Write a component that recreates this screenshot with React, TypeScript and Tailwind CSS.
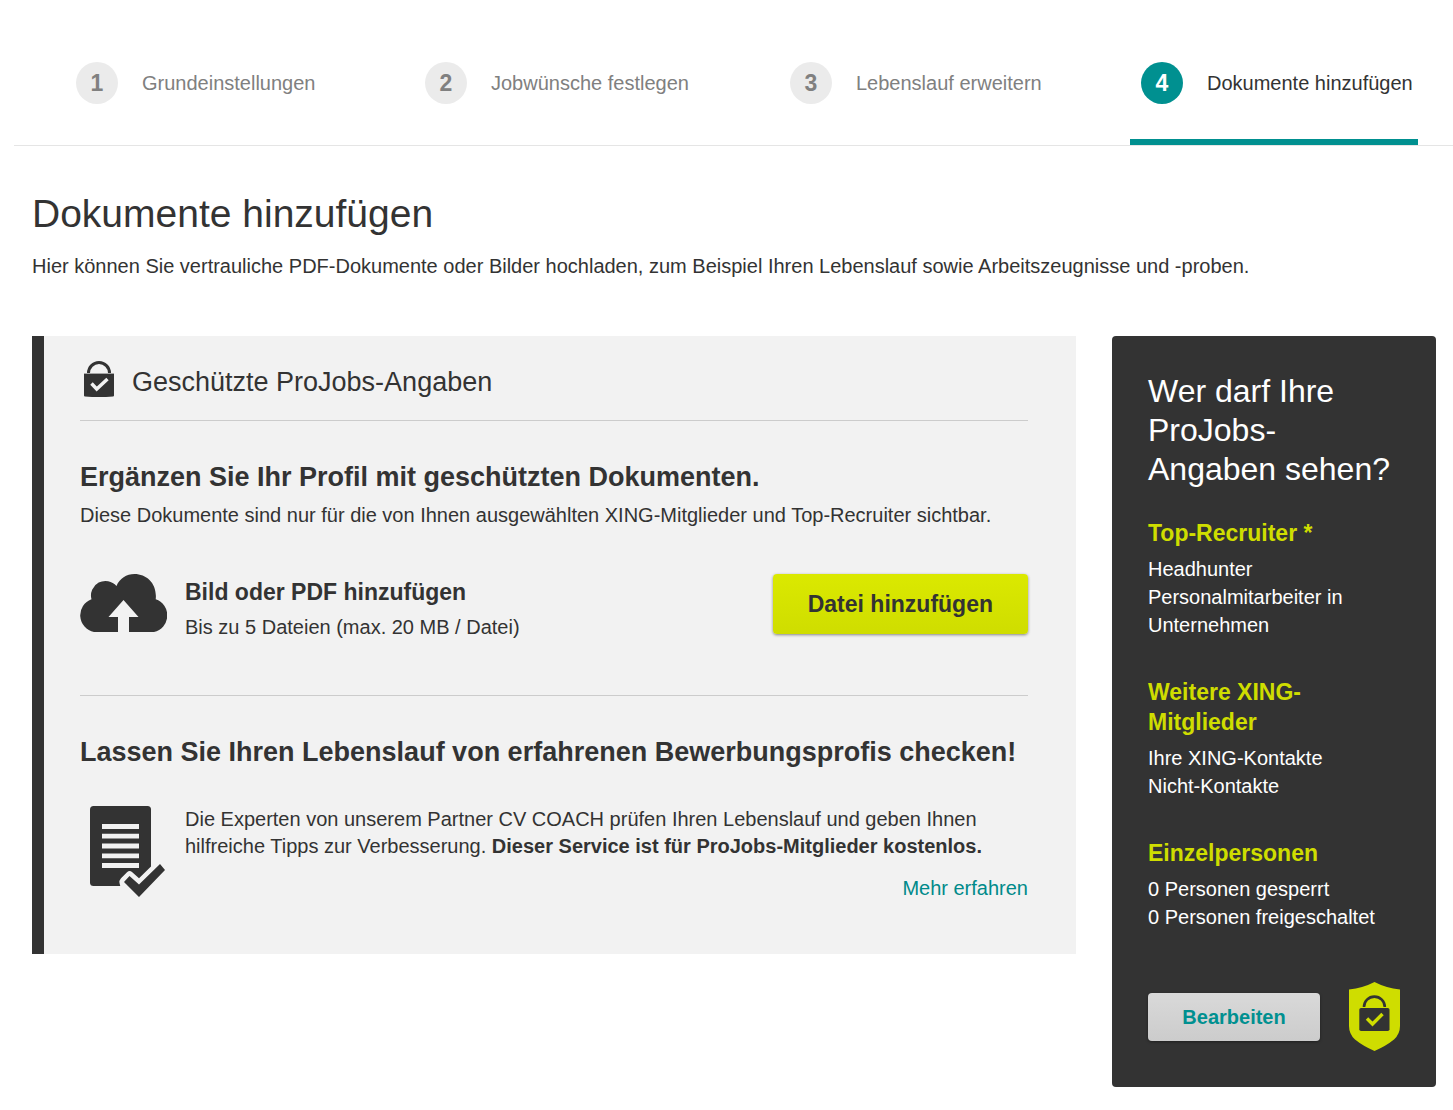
import type { ReactNode } from "react";

const steps = [
  { label: "Grundeinstellungen" },
  { label: "Jobwünsche festlegen" },
  { label: "Lebenslauf erweitern" },
  { label: "Dokumente hinzufügen", active: true },
];

function LockIcon() {
  return (
    <svg width="30" height="36" viewBox="0 0 30 36" aria-hidden="true" className="shrink-0">
      <path d="M4.500 12A10.500 10.500 0 0 1 25.500 12" fill="none" stroke="#333333" strokeWidth="3" />
      <path d="M0 12.500h30" stroke="#a6a6a6" strokeWidth="1" />
      <path d="M0 13h30V34.500q0 1-1 1Q15 36.500 1 35.500q-1 0-1-1Z" fill="#333333" />
      <path d="M7.500 22.500l5.200 5.500L23.500 18" fill="none" stroke="#f2f2f2" strokeWidth="3.400" />
    </svg>
  );
}

function CloudUploadIcon() {
  return (
    <svg width="87" height="58" viewBox="0 0 87 58" aria-hidden="true" className="shrink-0">
      <path
        d="M14 58A17 17 0 0 1 11.500 25.300A14.500 14.500 0 0 1 36.500 12C39.500 4.500 46.500 0 54.500 0C67 0 77.500 10 75.700 25.300A17 17 0 0 1 74 58H49V43H58.500L43.500 26L28.500 43H38V58Z"
        fill="#333333"
      />
    </svg>
  );
}

function DocumentCheckIcon() {
  return (
    <svg width="75" height="91" viewBox="0 0 75 91" aria-hidden="true" className="shrink-0">
      <rect width="61" height="80" rx="3.500" fill="#333333" />
      <path d="M12 20.500h37M12 30.200h37M12 40h37M12 49.800h37M12 59.500h37" stroke="#f2f2f2" strokeWidth="4.800" />
      <path d="M30.500 81L29.500 77Q29 74.500 31 72.300L37 66.300Q39.500 64 42 66L49 72.300L62 59.500V81Z" fill="#f2f2f2" />
      <path d="M34 76L39.500 70L49 78.500L70 58L75 64L49 91Z" fill="#333333" />
    </svg>
  );
}

function ShieldIcon() {
  return (
    <svg width="51" height="69" viewBox="0 0 51 69" aria-hidden="true" className="shrink-0">
      <path d="M25.500 0Q37 6 51 7.500V44Q51 52 45 57.500Q37 64 25.500 69Q14 64 6 57.500Q0 52 0 44V7.500Q14 6 25.500 0Z" fill="#cfdd00" />
      <path d="M15 25A10.400 10.400 0 0 1 35.800 25" fill="none" stroke="#333333" strokeWidth="2.600" />
      <rect x="10.300" y="26" width="30.200" height="23" rx="1.800" fill="#333333" />
      <path d="M18 36.500L23.500 42L33.500 32" fill="none" stroke="#cfdd00" strokeWidth="3.400" />
    </svg>
  );
}

function AccessGroup({ title, children }: { title: string; children: ReactNode }) {
  return (
    <section className="text-[20px] leading-[28px]">
      <h3 className="mb-[7px] text-[23px] font-bold leading-[30px] text-[#cfdd00]">{title}</h3>
      {children}
    </section>
  );
}

export default function App() {
  return (
    <div className="min-h-screen bg-white font-['Liberation_Sans',Arial,sans-serif] text-[20px] leading-[28px] text-[#333333]">
      <nav aria-label="Schritte" className="ml-[14px] border-b border-[#e5e5e5] pl-[51px] pr-[35px]">
        <ol className="grid grid-cols-[349fr_365fr_351fr_288fr]">
          {steps.map((step, i) => (
            <li
              key={step.label}
              aria-current={step.active ? "step" : undefined}
              className={
                step.active
                  ? "flex items-center whitespace-nowrap border-b-6 border-[#009090] pb-[35px] pl-[11px] pt-[62px]"
                  : "flex items-center whitespace-nowrap border-b-6 border-transparent pb-[35px] pl-[11px] pt-[62px] text-[#808080]"
              }
            >
              <span
                className={
                  step.active
                    ? "mr-[24px] flex size-[42px] shrink-0 items-center justify-center rounded-full bg-[#009090] text-[23px] font-bold text-white"
                    : "mr-[24px] flex size-[42px] shrink-0 items-center justify-center rounded-full bg-[#ebebeb] text-[23px] font-bold"
                }
              >
                {i + 1}
              </span>
              {step.label}
            </li>
          ))}
        </ol>
      </nav>

      <main className="pb-[23px] pl-[32px] pr-[17px] pt-[44px]">
        <h1 className="text-[39px] leading-[48px]">Dokumente hinzufügen</h1>
        <p className="mt-[14px]">
          Hier können Sie vertrauliche PDF-Dokumente oder Bilder hochladen, zum Beispiel Ihren Lebenslauf sowie
          Arbeitszeugnisse und -proben.
        </p>

        <div className="mt-[56px] flex items-start gap-[36px]">
          <section className="min-w-0 flex-1 border-l-12 border-[#333333] bg-[#f2f2f2] pb-[52px] pl-[36px] pr-[48px] pt-[25px]">
            <header className="flex items-center gap-[18px] border-b border-[#cccccc] pb-[23px] pl-[4px]">
              <LockIcon />
              <h2 className="pt-[6px] text-[27px] leading-[30px]">Geschützte ProJobs-Angaben</h2>
            </header>

            <h3 className="mt-[39px] text-[27px] font-bold leading-[34px]">
              Ergänzen Sie Ihr Profil mit geschützten Dokumenten.
            </h3>
            <p className="mt-[7px]">
              Diese Dokumente sind nur für die von Ihnen ausgewählten XING-Mitglieder und Top-Recruiter sichtbar.
            </p>

            <div className="mt-[45px] flex items-start border-b border-[#cccccc] pb-[54px]">
              <CloudUploadIcon />
              <div className="ml-[18px] flex-1 pt-[3px]">
                <h4 className="text-[23px] font-bold leading-[30px]">Bild oder PDF hinzufügen</h4>
                <p className="mt-[6px]">Bis zu 5 Dateien (max. 20 MB / Datei)</p>
              </div>
              <button
                type="button"
                className="h-[60px] rounded-[4px] bg-linear-to-b from-[#dbe900] to-[#cfdd00] px-[35px] text-[23px] font-bold shadow-[0_1px_3px_rgba(0,0,0,0.45)]"
              >
                Datei hinzufügen
              </button>
            </div>

            <h3 className="mt-[39px] text-[27px] font-bold leading-[34px]">
              Lassen Sie Ihren Lebenslauf von erfahrenen Bewerbungsprofis checken!
            </h3>
            <div className="mt-[37px] flex items-start gap-[20px] pl-[10px]">
              <DocumentCheckIcon />
              <div className="flex-1 leading-[27px]">
                <p>
                  Die Experten von unserem Partner CV COACH prüfen Ihren Lebenslauf und geben Ihnen
                  <br />
                  hilfreiche Tipps zur Verbesserung.{" "}
                  <strong>Dieser Service ist für ProJobs-Mitglieder kostenlos.</strong>
                </p>
                <p className="mt-[15px] text-right">
                  <a href="#mehr" className="text-[#008a8a]">
                    Mehr erfahren
                  </a>
                </p>
              </div>
            </div>
          </section>

          <aside className="w-[324px] shrink-0 rounded-[4px] bg-[#333333] px-[36px] pb-[36px] pt-[36px] text-white">
            <h2 className="text-[32px] leading-[39px]">
              Wer darf Ihre ProJobs-
              <br />
              Angaben sehen?
            </h2>
            <div className="mt-[29px] flex flex-col gap-[38px]">
              <AccessGroup title="Top-Recruiter *">
                <p>Headhunter</p>
                <p>Personalmitarbeiter in Unternehmen</p>
              </AccessGroup>
              <AccessGroup title="Weitere XING-Mitglieder">
                <p>Ihre XING-Kontakte</p>
                <p>Nicht-Kontakte</p>
              </AccessGroup>
              <AccessGroup title="Einzelpersonen">
                <p>0 Personen gesperrt</p>
                <p>0 Personen freigeschaltet</p>
              </AccessGroup>
            </div>
            <div className="mt-[51px] flex items-center justify-between">
              <button
                type="button"
                className="h-[48px] w-[172px] rounded-[4px] bg-linear-to-b from-[#d9d9d9] to-[#cccccc] text-[20px] font-bold text-[#009090] shadow-[0_1px_3px_rgba(0,0,0,0.4)]"
              >
                Bearbeiten
              </button>
              <ShieldIcon />
            </div>
          </aside>
        </div>
      </main>
    </div>
  );
}
